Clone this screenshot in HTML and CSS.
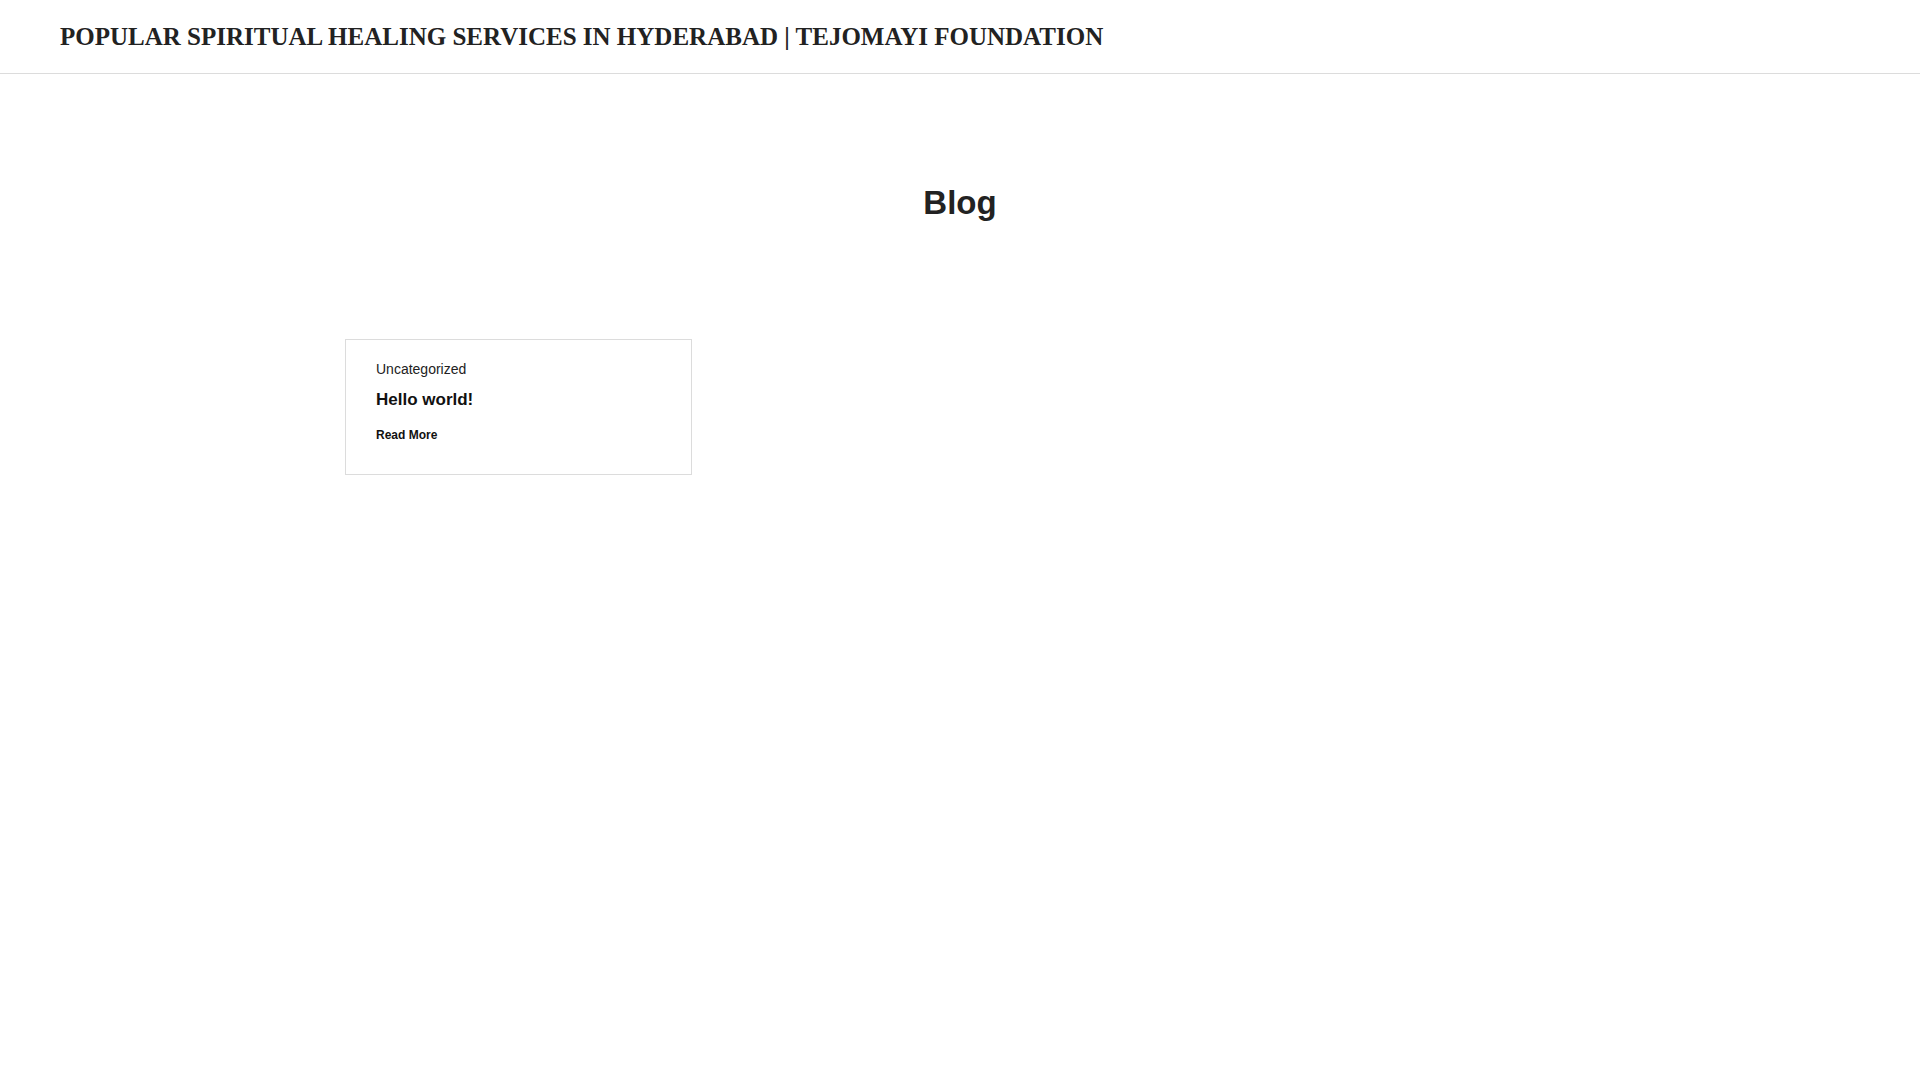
FILE: index.html
```html
<!DOCTYPE html>
<html lang="en">
<head>
<meta charset="utf-8">
<title>Blog – Popular Spiritual Healing Services in Hyderabad | Tejomayi Foundation</title>
<link rel="stylesheet" href="styles.css">
</head>
<body>
<header class="site-header">
  <a class="site-title" href="#">POPULAR SPIRITUAL HEALING SERVICES IN HYDERABAD | TEJOMAYI FOUNDATION</a>
</header>
<main class="site-main">
  <h1 class="page-title">Blog</h1>
  <div class="post-grid">
    <article class="post-card">
      <div class="post-cat">Uncategorized</div>
      <h2 class="post-title">Hello world!</h2>
      <a class="read-more" href="#">Read More</a>
    </article>
  </div>
</main>
</body>
</html>
```
FILE: styles.css
```css
html, body {
  margin: 0;
  padding: 0;
  background: #fff;
}
body {
  font-family: "Liberation Sans", Arial, sans-serif;
  color: #222;
}
.site-header {
  height: 73px;
  border-bottom: 1px solid #dcdcdc;
  display: flex;
  align-items: center;
  padding: 0 60px;
}
.site-title {
  font-family: "Liberation Serif", "Times New Roman", serif;
  font-weight: 700;
  font-size: 25px;
  line-height: 1.2;
  color: #222;
  text-decoration: none;
}
.site-main {
  width: 1230px;
  margin: 0 auto;
  padding-top: 109px;
}
.page-title {
  margin: 0;
  text-align: center;
  font-size: 33px;
  line-height: 1.2;
  font-weight: 700;
  color: #222;
}
.post-grid {
  margin-top: 116px;
  display: grid;
  grid-template-columns: repeat(3, 347px);
  column-gap: 94px;
}
.post-card {
  border: 1px solid #dcdcdc;
  padding: 19px 30px 30px;
  display: flex;
  flex-direction: column;
  align-items: flex-start;
}
.post-cat {
  font-size: 14px;
  line-height: 1.5;
  color: #222;
}
.post-title {
  margin: 7px 0 0;
  font-size: 17px;
  line-height: 1.5;
  font-weight: 700;
  color: #111;
}
.read-more {
  margin-top: 14px;
  font-size: 12px;
  line-height: 1.5;
  font-weight: 700;
  color: #111;
  text-decoration: none;
}
```
